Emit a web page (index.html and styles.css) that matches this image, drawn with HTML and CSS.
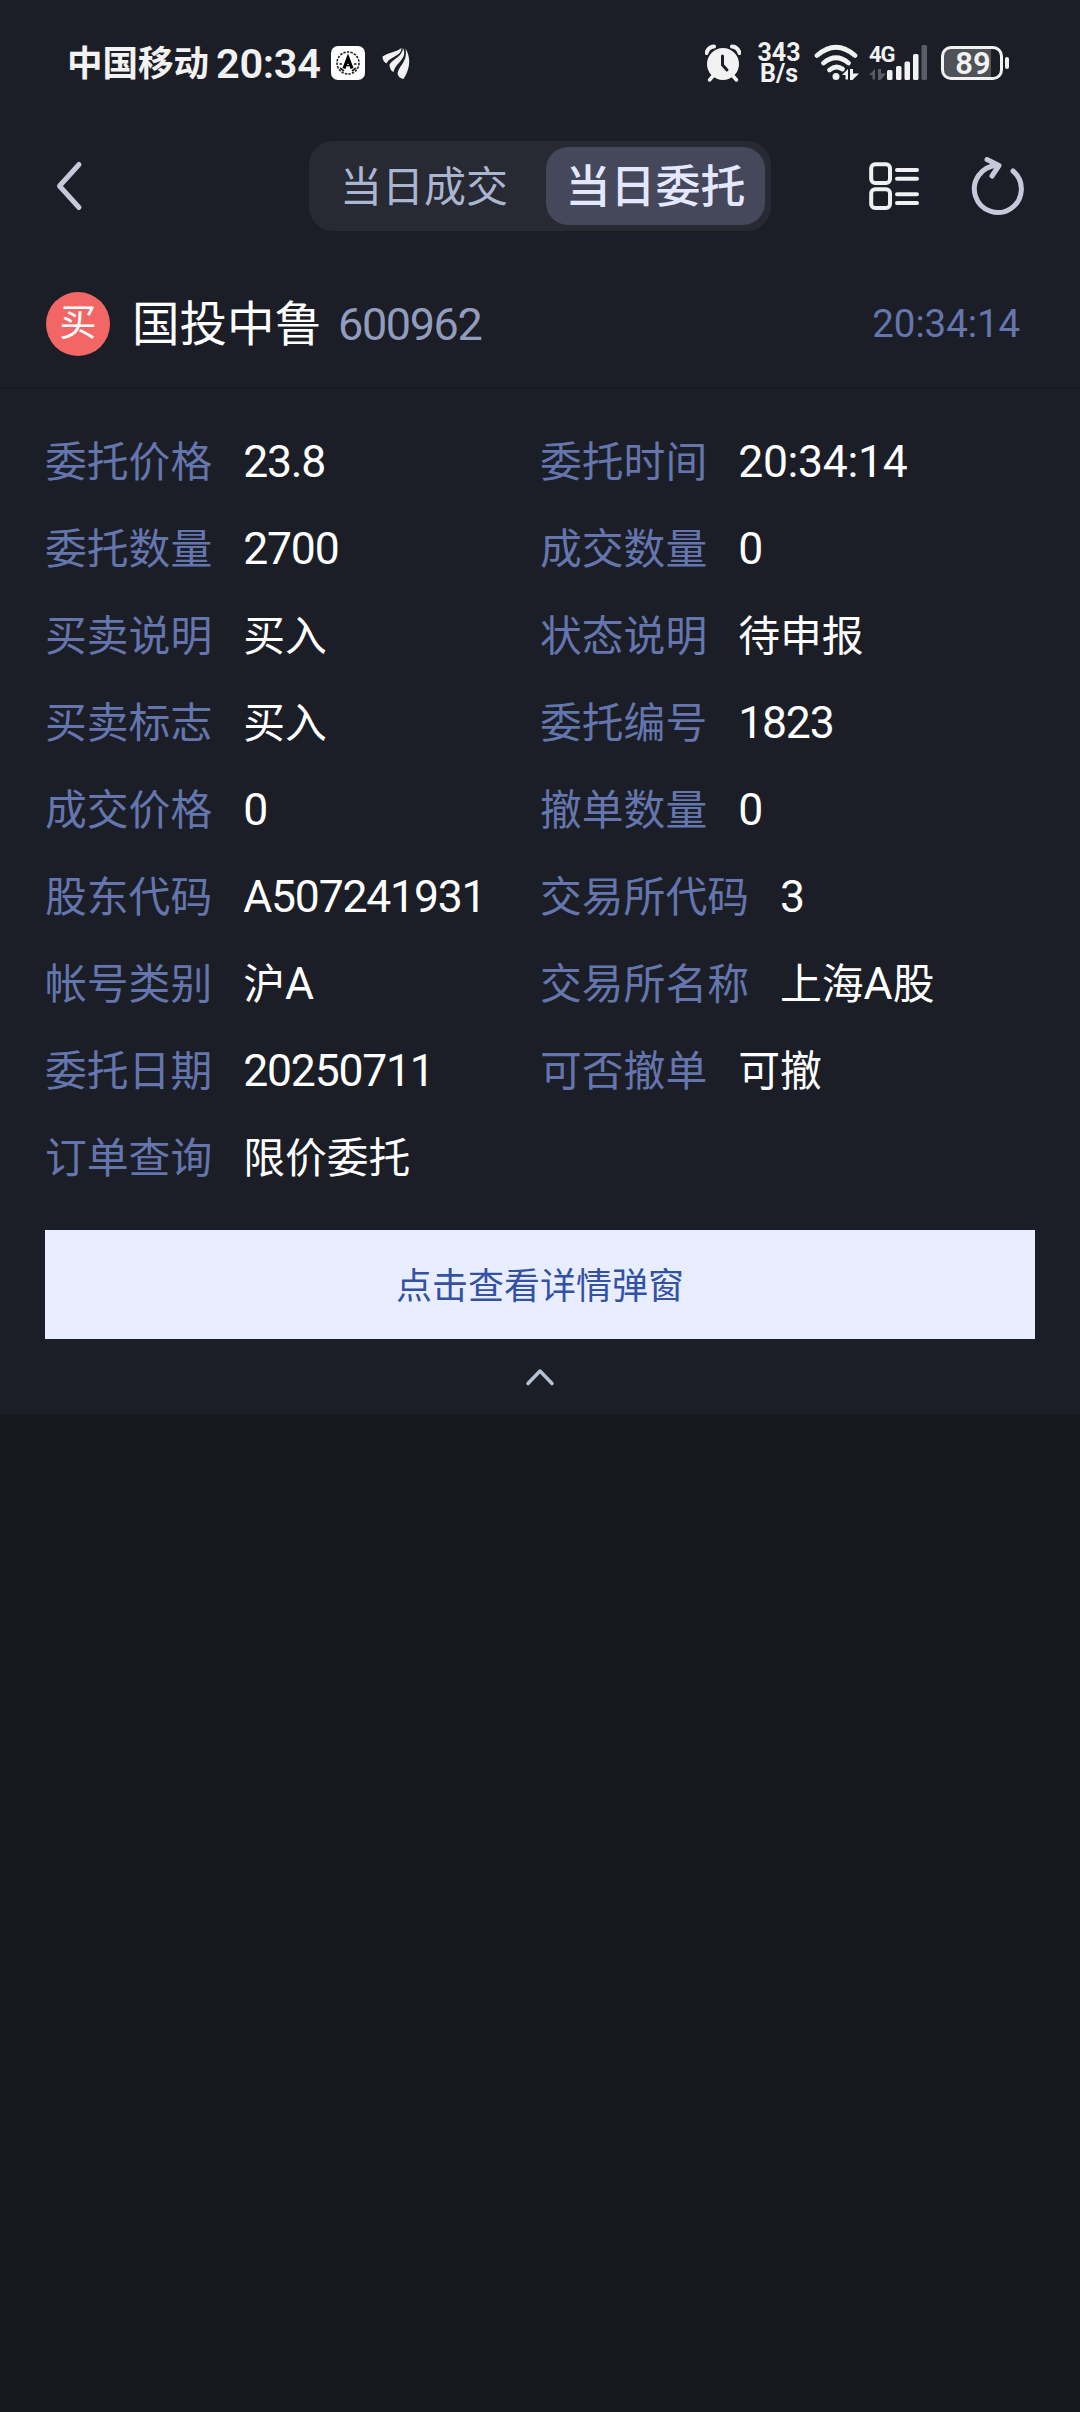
FILE: index.html
```html
<!DOCTYPE html>
<html lang="zh-CN">
<head>
    <meta charset="UTF-8">
    <meta name="viewport" content="width=device-width, initial-scale=1.0">
    <title>当日委托</title>
    <link rel="stylesheet" href="styles.css">
</head>
<body>
    <div class="status-bar">
        <span class="carrier">中国移动</span>
        <span class="clock">20:34</span>
        <svg class="app-icon" width="34" height="34" viewBox="0 0 34 34">
            <rect width="34" height="34" rx="7" fill="#fff"/>
            <circle cx="17" cy="17" r="11" fill="none" stroke="#222" stroke-width="1.600" stroke-dasharray="2.400 1.200"/>
            <path d="M9 22 L13 25 M25 22 L21 25 M8.500 18 H11 M23 18 H25.500" stroke="#222" stroke-width="1.600"/>
            <path d="M13 22.500 L17 12 L21 22.500" fill="none" stroke="#000" stroke-width="3.200"/>
            <circle cx="17" cy="18.500" r="2" fill="#000"/>
            <circle cx="17" cy="18.500" r="0.800" fill="#fff"/>
        </svg>
        <svg class="leaf-icon" width="28" height="34" viewBox="0 0 28 34">
            <path d="M0.500 10.500 C8 5.500 13 7 19.500 2 C19 11 8 10 4.500 17.500 C2 16 0.500 14 0.500 10.500Z" fill="#f2f2f2"/>
            <path d="M7.500 18.500 C12 12 20 11 21 2 C26 13 14 16 11.500 26 C9 25 7.500 22 7.500 18.500Z" fill="#f2f2f2"/>
            <path d="M15.500 27.500 C17 19 26 16 23.500 2.500 C30 13 27 25 21.500 33 C18 32.500 16 30.500 15.500 27.500Z" fill="#f2f2f2"/>
        </svg>
        <div class="status-right">
            <svg class="alarm" width="36" height="40" viewBox="0 0 36 40">
                <path d="M1.500 10 Q3 4 9 3.500 M34.500 10 Q33 4 27 3.500" fill="none" stroke="#f2f2f2" stroke-width="4" stroke-linecap="round"/>
                <path d="M8 33 L4.500 37 M28 33 L31.500 37" stroke="#f2f2f2" stroke-width="3.500" stroke-linecap="round"/>
                <circle cx="18" cy="21" r="16" fill="#f2f2f2"/>
                <path d="M17.500 13 V22 L22 27" fill="none" stroke="#1b1e26" stroke-width="3" stroke-linecap="round"/>
            </svg>
            <div class="speed"><span>343</span><span>B/s</span></div>
            <svg class="wifi" width="46" height="38" viewBox="0 0 46 38">
                <g fill="none" stroke="#f2f2f2" stroke-width="4.800" stroke-linecap="round">
                    <path d="M3 11.500 Q22 -5 41 11.500"/>
                    <path d="M9.500 19 Q22 8.500 34.500 19"/>
                    <path d="M15.500 26 Q22 20.500 28.500 25"/>
                </g>
                <circle cx="22" cy="32.500" r="3.500" fill="#f2f2f2"/>
                <path d="M28 31 L34 25 V35.500 H31.500 V31Z M36 25 H39 V29.500 H45 L38.500 36 H36Z" fill="#f2f2f2"/>
            </svg>
            <div class="signal">
                <span class="network">4G</span>
                <svg width="60" height="38" viewBox="0 0 60 38">
                    <path d="M0 31 L6 25 V35.500 H3.500 V31Z M9 25 H12 V29.500 H17 L11.500 36 H9Z" fill="#5b5d65"/>
                    <g fill="#f2f2f2">
                        <rect x="18" y="26" width="5.500" height="10" rx="1.500"/>
                        <rect x="27" y="22" width="5.500" height="14" rx="1.500"/>
                        <rect x="35.500" y="17.500" width="5.500" height="18.500" rx="1.500"/>
                        <rect x="44" y="10" width="5.500" height="26" rx="1.500"/>
                    </g>
                    <rect x="52.500" y="1" width="5.500" height="35" rx="1.500" fill="#5b5d65"/>
                </svg>
            </div>
            <div class="battery"><span class="battery-box">89</span><i class="battery-tip"></i></div>
        </div>
    </div>

    <div class="nav">
        <svg class="back" width="30" height="52" viewBox="0 0 30 52">
            <path d="M25 4.500 L5.500 26 L25 47.500" fill="none" stroke="#c8c8da" stroke-width="5" stroke-linecap="round" stroke-linejoin="round"/>
        </svg>
        <div class="tabs">
            <div class="tab">当日成交</div>
            <div class="tab active">当日委托</div>
        </div>
        <svg class="list-icon" width="50" height="48" viewBox="0 0 50 48">
            <g fill="none" stroke="#f0f0f2" stroke-width="4">
                <rect x="2.200" y="2.200" width="18.800" height="18.800" rx="4"/>
                <rect x="2.200" y="27.200" width="18.800" height="18.800" rx="4"/>
                <path d="M28 8 H48 M28 16.800 H48 M28 32.300 H48 M28 41 H48" stroke-linecap="round"/>
            </g>
        </svg>
        <svg class="refresh" width="54" height="60" viewBox="0 0 54 60">
            <g fill="none" stroke="#c8c8da" stroke-width="5" stroke-linecap="round" stroke-linejoin="round">
                <path d="M42 15 A23.500 23.500 0 1 1 26 9.500"/>
                <path d="M16 3.500 L28 9.500 L21 20"/>
            </g>
        </svg>
    </div>

    <div class="order">
        <div class="order-head">
            <span class="badge">买</span>
            <span class="stock-name">国投中鲁</span>
            <span class="stock-code">600962</span>
            <span class="order-time">20:34:14</span>
        </div>
        <div class="detail">
            <div class="item"><label>委托价格</label><span class="num">23.8</span></div>
            <div class="item"><label>委托时间</label><span class="num time">20:34:14</span></div>
            <div class="item"><label>委托数量</label><span class="num">2700</span></div>
            <div class="item"><label>成交数量</label><span class="num">0</span></div>
            <div class="item"><label>买卖说明</label><span>买入</span></div>
            <div class="item"><label>状态说明</label><span>待申报</span></div>
            <div class="item"><label>买卖标志</label><span>买入</span></div>
            <div class="item"><label>委托编号</label><span class="num">1823</span></div>
            <div class="item"><label>成交价格</label><span class="num">0</span></div>
            <div class="item"><label>撤单数量</label><span class="num">0</span></div>
            <div class="item"><label>股东代码</label><span class="num">A507241931</span></div>
            <div class="item"><label>交易所代码</label><span class="num">3</span></div>
            <div class="item"><label>帐号类别</label><span>沪<b>A</b></span></div>
            <div class="item"><label>交易所名称</label><span>上海<b>A</b>股</span></div>
            <div class="item"><label>委托日期</label><span class="num">20250711</span></div>
            <div class="item"><label>可否撤单</label><span>可撤</span></div>
            <div class="item"><label>订单查询</label><span>限价委托</span></div>
        </div>
        <button class="detail-btn">点击查看详情弹窗</button>
        <svg class="collapse" width="30" height="20" viewBox="0 0 30 20">
            <path d="M3 16.500 L15 4 L27 16.500" fill="none" stroke="#b9c1d6" stroke-width="3.500" stroke-linecap="round" stroke-linejoin="round"/>
        </svg>
    </div>
</body>
</html>
```
FILE: styles.css
```css
* {
    box-sizing: border-box;
}

body {
    margin: 0;
    background-color: #16191f;
    color: #fff;
    font-family: Roboto, "Noto Sans CJK SC", sans-serif;
    font-size: 42px;
    line-height: 1;
    min-height: 100vh;
}

svg {
    display: block;
    flex-shrink: 0;
}

/* Status bar */
.status-bar {
    display: flex;
    align-items: center;
    height: 126px;
    padding: 0 71px 0 67px;
    background-color: #1b1e26;
    color: #f2f2f2;
}

.carrier {
    padding-top: 4px;
    font-size: 35.5px;
    font-weight: 700;
}

.clock {
    margin-left: 7px;
    width: 104px;
    font-size: 41.5px;
    font-weight: 600;
    letter-spacing: -0.3px;
    white-space: nowrap;
    padding-top: 2px;
}

.app-icon {
    margin-left: 11px;
}

.leaf-icon {
    margin-left: 17px;
}

.status-right {
    display: flex;
    align-items: center;
    margin-left: auto;
}

.speed {
    display: flex;
    flex-direction: column;
    align-items: center;
    width: 46px;
    margin-left: 15px;
    font-size: 25px;
    font-weight: 700;
    line-height: 21px;
}

.wifi {
    margin-left: 12px;
}

.signal {
    position: relative;
    margin-left: 9px;
}

.network {
    position: absolute;
    top: 0;
    left: 0;
    font-size: 22px;
    font-weight: 700;
    letter-spacing: -1px;
}

.battery {
    display: flex;
    align-items: center;
    margin-left: 12px;
}

.battery-box {
    width: 62px;
    height: 34px;
    border: 3px solid #f2f2f2;
    border-radius: 10px;
    background: linear-gradient(to right, #505259 47px, #1b1e26 47px);
    font-size: 31px;
    font-weight: 600;
    line-height: 30px;
    text-align: center;
    padding-left: 2px;
}

.battery-tip {
    width: 4px;
    height: 12px;
    margin-left: 2px;
    border-radius: 2px;
    background-color: #f2f2f2;
}

/* Top navigation */
.nav {
    display: flex;
    align-items: center;
    height: 120px;
    padding: 0 55px 0 54px;
    background-color: #1b1e26;
}

.tabs {
    display: flex;
    width: 462px;
    height: 90px;
    margin-left: 225px;
    padding: 6px;
    border-radius: 24px;
    background-color: #272933;
}

.tab {
    flex: 1;
    padding: 2px 0 0 25px;
    color: #aab6d0;
    font-size: 42px;
    line-height: 78px;
    white-space: nowrap;
}

.tab.active {
    flex: 0 0 219px;
    padding: 2px 0 0;
    height: 78px;
    border-radius: 22px;
    background-color: #45475b;
    color: #e4e8ff;
    font-size: 45px;
    font-weight: 500;
    text-align: center;
}

.list-icon {
    margin-left: auto;
}

.refresh {
    margin-left: 52px;
}

/* Order card */
.order {
    height: 1169px;
    background-color: #1b1e26;
}

.order-head {
    display: flex;
    align-items: center;
    height: 143px;
    padding: 14px 60px 0 46px;
    border-bottom: 2px solid #171a21;
}

.badge {
    width: 64px;
    height: 64px;
    border-radius: 50%;
    background-color: #f26666;
    font-size: 37px;
    line-height: 64px;
    text-align: center;
}

.stock-name {
    margin-left: 22px;
    padding-top: 4px;
    font-size: 47.5px;
}

.stock-code {
    margin-left: 16px;
    padding-top: 2px;
    color: #929dbd;
    font-size: 45px;
    letter-spacing: -1.4px;
}

.order-time {
    margin-left: auto;
    padding-top: 2px;
    color: #6476ad;
    font-size: 38.5px;
    letter-spacing: -0.1px;
}

.detail {
    display: grid;
    grid-template-columns: 495px 1fr;
    grid-auto-rows: 87px;
    padding: 30px 45px 0;
}

.item {
    display: flex;
    align-items: center;
    gap: 31px;
    font-size: 41.8px;
    white-space: nowrap;
}

.item label {
    color: #6476ad;
}

.item b {
    font-size: 44.5px;
    font-weight: 400;
}

.num {
    font-size: 44.5px;
    letter-spacing: -1.2px;
}

.num.time {
    letter-spacing: -0.3px;
}

.detail-btn {
    display: block;
    width: 990px;
    height: 109px;
    margin: 28px auto 0;
    padding: 0 0 3px;
    border: none;
    background-color: #e8eeff;
    color: #3452a4;
    font-family: inherit;
    font-size: 36px;
}

.collapse {
    margin: 28px auto 0;
}
```
